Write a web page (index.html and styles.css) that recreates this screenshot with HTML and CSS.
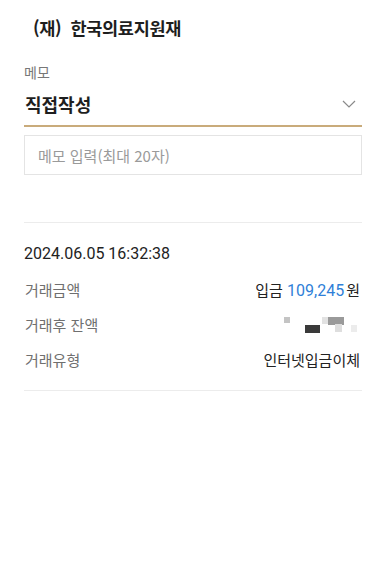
FILE: index.html
```html
<!DOCTYPE html>
<html lang="ko">
<head>
<meta charset="utf-8">
<link rel="stylesheet" href="styles.css">
</head>
<body>
<header class="top">
  <h1 class="title"><span class="prefix">(재)</span>한국의료지원재</h1>
</header>
<main class="content">
  <section class="memo">
    <div class="memo-label">메모</div>
    <div class="select">
      <span class="select-value">직접작성</span>
      <svg class="chev" width="14" height="8" viewBox="0 0 14 8"><path d="M1 1 L7 7 L13 1" fill="none" stroke="#8a8a8a" stroke-width="1.2"/></svg>
    </div>
    <div class="memo-input">메모 입력(최대 20자)</div>
  </section>
  <section class="detail">
    <div class="date">2024.06.05 16:32:38</div>
    <div class="row">
      <span class="key">거래금액</span>
      <span class="val">입금 <span class="amount">109,245</span>원</span>
    </div>
    <div class="row">
      <span class="key">거래후 잔액</span>
      <svg class="blur" width="76" height="18" viewBox="0 0 76 18">
        <rect x="0" y="1" width="6" height="6" fill="#c4c4c4"/>
        <rect x="21" y="9" width="15" height="8" fill="#3a3a3a"/>
        <rect x="38" y="1" width="6" height="7" fill="#e2e2e2"/>
        <rect x="44" y="1" width="16" height="8" fill="#9a9a9a"/>
        <rect x="51" y="8" width="7" height="8" fill="#dedede"/>
        <rect x="67" y="9" width="6" height="7" fill="#ececec"/>
      </svg>
    </div>
    <div class="row">
      <span class="key">거래유형</span>
      <span class="val">인터넷입금이체</span>
    </div>
  </section>
</main>
</body>
</html>
```
FILE: styles.css
```css
* { box-sizing: border-box; }
html, body { margin: 0; padding: 0; background: #fff; }
body {
  font-family: "Noto Sans CJK KR", "Noto Sans", sans-serif;
  color: #222;
  width: 386px;
}
.top {
  height: 54px;
  display: flex;
  align-items: center;
  padding-left: 33px;
}
.title {
  margin: 0;
  font-size: 17.5px;
  font-weight: 700;
  color: #1e1e1e;
  letter-spacing: -0.3px;
}
.prefix { margin-right: 9px; }
.content { padding: 0 24px; }
.memo { padding-top: 8px; }
.memo-label {
  font-size: 14px;
  color: #777;
  line-height: 20px;
}
.select {
  display: flex;
  align-items: center;
  justify-content: space-between;
  height: 45px;
  border-bottom: 2px solid #c9ab7b;
  padding: 0 6px 0 1px;
}
.select-value {
  font-size: 18px;
  font-weight: 700;
  color: #1e1e1e;
}
.memo-input {
  margin-top: 8px;
  height: 40px;
  border: 1px solid #e4e4e4;
  display: flex;
  align-items: center;
  padding-left: 13px;
  font-size: 15px;
  color: #9a9a9a;
}
.detail {
  margin-top: 47px;
  border-top: 1px solid #ececec;
  border-bottom: 1px solid #ececec;
  padding: 20px 0 13px;
}
.date {
  font-family: "Roboto", "Noto Sans CJK KR", sans-serif;
  font-size: 16px;
  color: #222;
  line-height: 22px;
  margin-bottom: 7px;
}
.row {
  display: flex;
  justify-content: space-between;
  align-items: center;
  height: 35px;
  padding-right: 2px;
}
.key {
  font-size: 15px;
  color: #6f6f6f;
  padding-left: 1px;
}
.val {
  font-size: 15px;
  color: #222;
}
.amount {
  font-family: "Roboto", sans-serif;
  font-size: 16px;
  color: #2f7fd8;
  margin-right: 2px;
}
.blur { display: block; }
```
